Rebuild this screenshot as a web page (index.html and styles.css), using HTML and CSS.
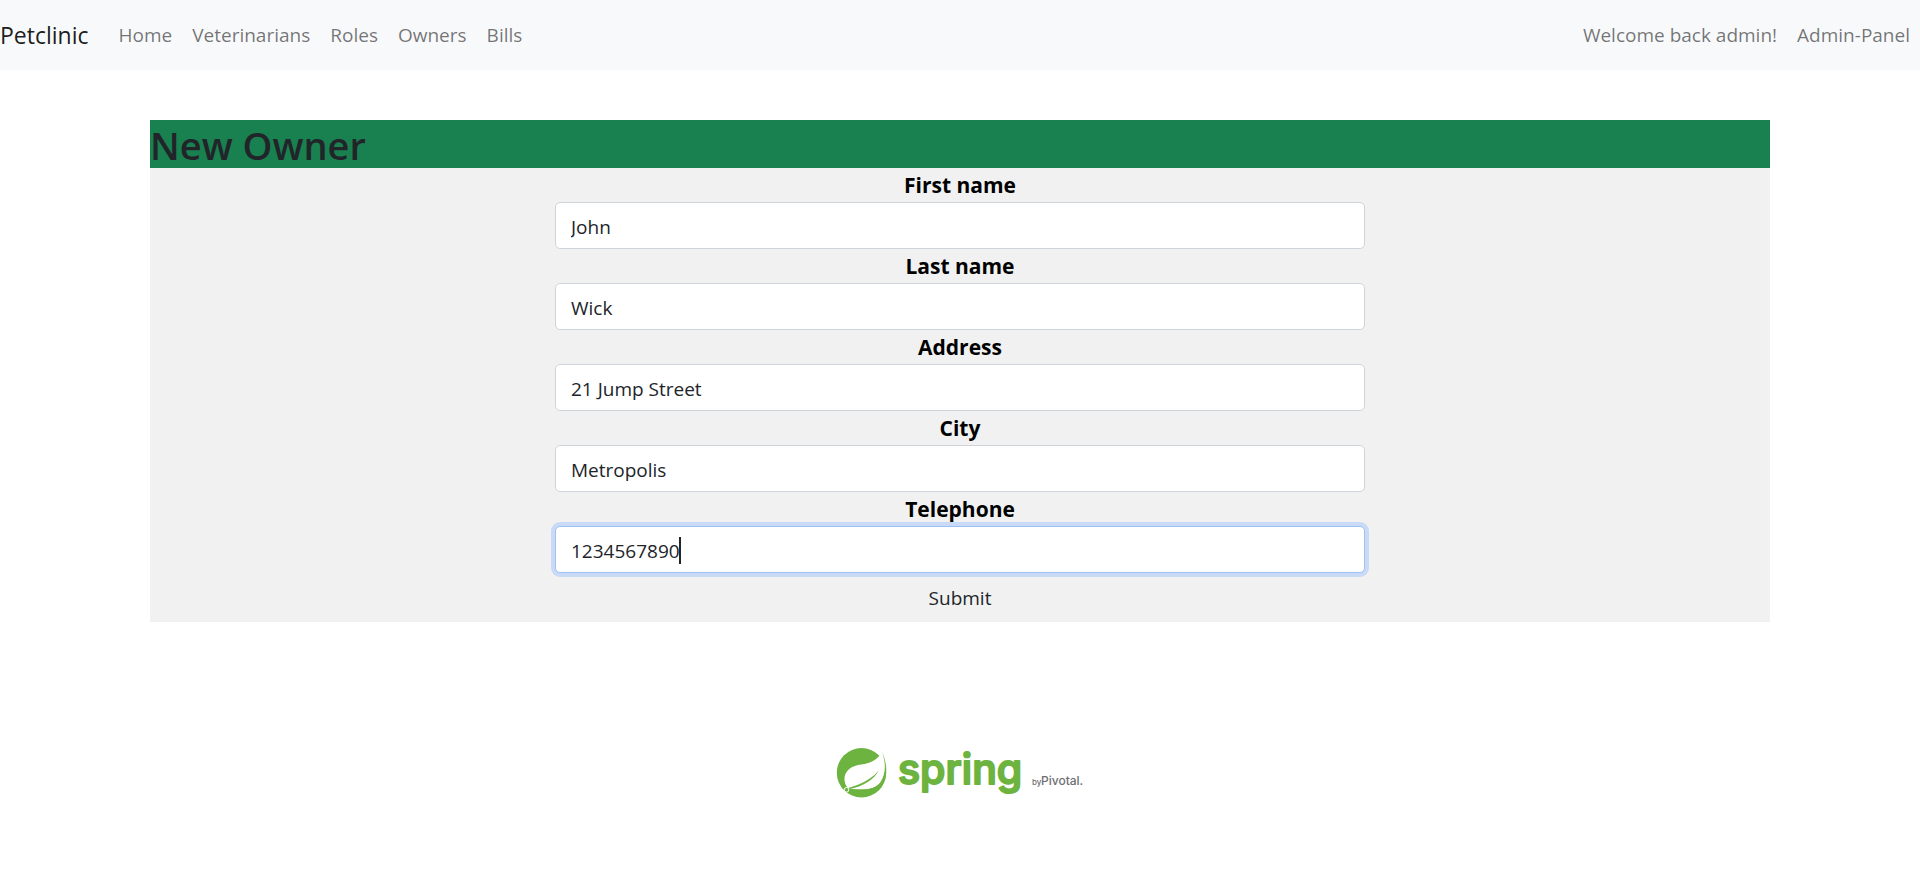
FILE: index.html
```html
<!DOCTYPE html>
<html lang="en">
<head>
<meta charset="utf-8">
<title>Petclinic</title>
<link rel="stylesheet" href="styles.css">
</head>
<body>
<nav class="navbar">
  <a class="brand" href="#">Petclinic</a>
  <div class="nav-links">
    <a href="#">Home</a>
    <a href="#">Veterinarians</a>
    <a href="#">Roles</a>
    <a href="#">Owners</a>
    <a href="#">Bills</a>
  </div>
  <div class="nav-links nav-end">
    <a href="#">Welcome back admin!</a>
    <a href="#">Admin-Panel</a>
  </div>
</nav>
<main class="panel">
  <h1 class="panel-title">New Owner</h1>
  <form class="owner-form">
    <label for="first-name">First name</label>
    <input id="first-name" type="text" value="John">
    <label for="last-name">Last name</label>
    <input id="last-name" type="text" value="Wick">
    <label for="address">Address</label>
    <input id="address" type="text" value="21 Jump Street">
    <label for="city">City</label>
    <input id="city" type="text" value="Metropolis">
    <label for="telephone">Telephone</label>
    <div class="field">
      <input class="active" id="telephone" type="text" value="1234567890">
      <span class="caret"></span>
    </div>
    <button type="submit">Submit</button>
  </form>
</main>
<footer class="footer">
  <svg class="logo" viewBox="0 0 280 80" role="img" aria-label="spring by Pivotal">
    <circle cx="41.5" cy="42.7" r="24.7" fill="#6db33f"/>
    <path d="M62 21.5C56 33 47 33.500 38 35C29 37 24 43 24.500 50C24.800 54 26.500 57 29 58.800C43 60.500 55 60 60.500 52C66 44 66 33 62 21.500Z" fill="#fff"/>
    <path d="M62 21.500C66 34 66.500 44 61.500 52C56 59.500 44 60.500 29 59L27.500 60.200C42 62 55 62.500 61.500 55.500C67 48 68.500 37 62 21.500Z" fill="#6db33f"/>
    <path d="M29 59.200C43 56.500 54 50 58.800 40.300C53 47.500 44 53.500 29 57.800Z" fill="#6db33f"/>
    <circle cx="26.500" cy="59.800" r="2.300" fill="#6db33f" stroke="#fff" stroke-width="1"/>
    <text class="logo-name" x="78" y="54">spring</text>
    <text class="logo-by" x="212" y="55">by</text>
    <text class="logo-owner" x="221" y="55">Pivotal.</text>
  </svg>
</footer>
</body>
</html>
```
FILE: styles.css
```css
* {
  box-sizing: border-box;
}

body {
  margin: 0;
  background: #fff;
  color: #212529;
  font-family: "Segoe UI", "Open Sans", "Noto Sans", sans-serif;
  font-size: 19px;
  line-height: 30px;
}

.navbar {
  display: flex;
  align-items: center;
  gap: 20px;
  padding: 10px 0;
  background: #f8f9fb;
}

.navbar a {
  color: rgba(0, 0, 0, 0.55);
  text-decoration: none;
}

.navbar .brand {
  color: rgba(0, 0, 0, 0.9);
  font-size: 23px;
}

.nav-links {
  display: flex;
}

.nav-links a {
  padding: 10px;
}

.nav-end {
  margin-left: auto;
}

.panel {
  margin: 50px 150px 0;
  background: #f1f1f1;
}

.panel-title {
  height: 48px;
  margin: 0;
  background: #198050;
  font-size: 38px;
  font-weight: 600;
  line-height: 50px;
}

.owner-form {
  display: flex;
  flex-direction: column;
  width: 50%;
  margin: 0 auto;
}

.owner-form label {
  color: #000;
  font-size: 21px;
  font-weight: 700;
  line-height: 34px;
  text-align: center;
}

.owner-form input {
  width: 100%;
  height: 47px;
  padding: 2px 15px 0;
  border: 1px solid #ced4da;
  border-radius: 5px;
  background: #fff;
  color: #212529;
  font: inherit;
}

.owner-form .active {
  border-color: #9ec0f5;
  box-shadow: 0 0 0 4px #c8daf5;
}

.field {
  position: relative;
}

.caret {
  position: absolute;
  top: 11px;
  left: calc(15px + 10ch);
  width: 2px;
  height: 27px;
  background: #212529;
}

.owner-form button {
  align-self: center;
  padding: 10px 16px 9px;
  border: 0;
  background: transparent;
  color: #212529;
  font: inherit;
}

.footer {
  display: flex;
  justify-content: center;
  padding-top: 108px;
}

.logo {
  width: 280px;
  height: 80px;
}

.logo-name {
  fill: #6db33f;
  stroke: #6db33f;
  stroke-width: 2px;
  stroke-linejoin: round;
  font-family: Inter, sans-serif;
  font-size: 41px;
  font-weight: 500;
}

.logo-by,
.logo-owner {
  fill: #6d6e71;
  font-family: Inter, sans-serif;
  font-size: 12px;
  font-weight: 500;
}

.logo-by {
  font-size: 8px;
}
```
